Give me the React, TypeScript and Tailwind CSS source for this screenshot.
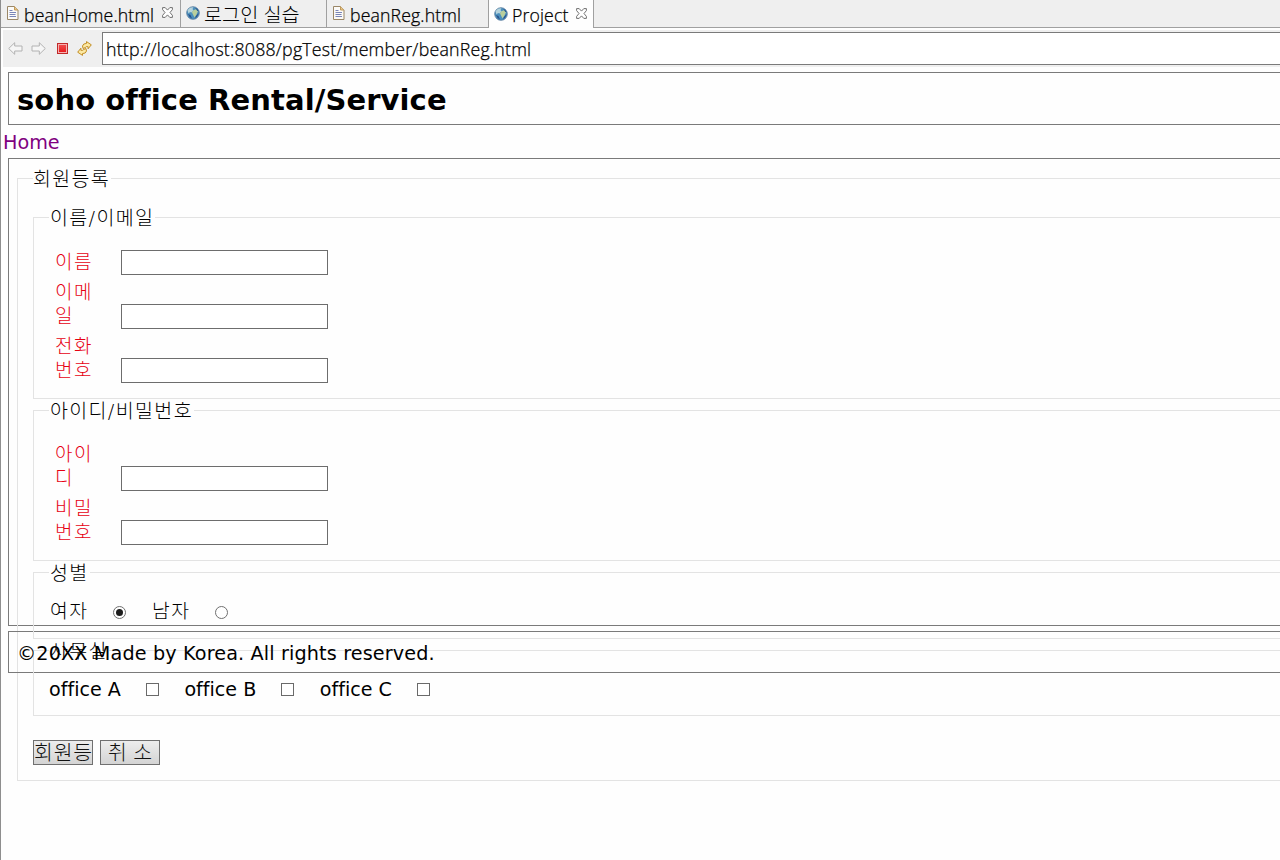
import type { ReactNode } from "react";

function FileIcon() {
  return (
    <svg className="-mt-px h-[14px] w-[12px] shrink-0" viewBox="0 0 12 14">
      <path d="M.5 .5h7l3.500 3.500v9.500h-10.500z" fill="#fbfaf8" stroke="#9a8767" />
      <path d="M7.500 .5v3.500h3.500" fill="#ecc98a" stroke="#c09a5c" />
      <path d="M2.500 4.500h3M2.500 6.500h6.500M2.500 8.500h6M2.500 10.500h6.500" stroke="#7a86b8" />
    </svg>
  );
}

function GlobeIcon() {
  return (
    <svg className="-mt-px size-[14px] shrink-0" viewBox="0 0 14 14">
      <circle cx="7" cy="7" r="6.300" fill="#4b8fbd" stroke="#55799a" strokeWidth=".8" />
      <path d="M1.500 4.500Q3.500 .9 7.500 1.200L6.500 3 7.500 4.500 5.500 6.500 4 6 2.500 7.500z" fill="#b5d3dc" />
      <path d="M7 4.500l3.500-1.500 1.500 2-1.500 3.500-2 3-1.500-3-1-2z" fill="#b9cf9c" />
      <path d="M2 8l2.500 1 1.500 3.500q-3-1-4-4.500zM10 10l2.500-3q-.3 3.500-3.500 5z" fill="#27508a" />
      <path d="M9 1.600q3 1 3.800 4l-2-1.400z" fill="#24558c" />
    </svg>
  );
}

function CloseIcon() {
  return (
    <svg className="-mt-[2px] size-[11px] shrink-0" viewBox="0 0 11 11" fill="#fff" stroke="#626262" strokeWidth=".9">
      <path d="M.6.6h2.600l2.300 2.500L7.800.6h2.600v2L8 5.500l2.400 2.900v2H7.800L5.500 7.900l-2.300 2.500H.6v-2L3 5.500.6 2.600z" />
    </svg>
  );
}

function ArrowIcon({ right = false }: { right?: boolean }) {
  return (
    <svg className={right ? "h-[13px] w-[15px] -scale-x-100" : "h-[13px] w-[15px]"} viewBox="0 0 15 13">
      <path d="M.7 6.500l6-5.800v3.300h7.300v5H6.700v3.300z" fill="#f6f6f6" stroke="#b2b2b2" strokeLinejoin="round" />
    </svg>
  );
}

function RefreshIcon() {
  return (
    <svg className="size-[15px]" viewBox="0 0 15 15" fill="#fce9a4" stroke="#bd8414" strokeWidth=".9" strokeLinejoin="round">
      <path d="M6 7.500L5.500 5q.5-2.600 4-2.600V.6l4.800 3.200-3.200 4V5.700Q9 5.200 8.300 6.500z" />
      <path d="M9 7.500l.5 2.500q-.5 2.600-4 2.600v1.800L.7 11.200l3.200-4v2.100Q6 9.800 6.700 8.500z" />
    </svg>
  );
}

const legendText = "h-[23px] pr-px text-[19.500px] leading-[25px] tracking-[1.350px] font-light";

function Group({ title, className, children }: { title: string; className: string; children: ReactNode }) {
  return (
    <fieldset className={`border border-[#e3e3e3] pl-[15px] ${className}`}>
      <legend className={`pl-px ${legendText}`}>{title}</legend>
      {children}
    </fieldset>
  );
}

function Field({ label, className }: { label: string; className: string }) {
  return (
    <div className={`flex items-end pl-[6px] ${className}`}>
      <label className="mb-px w-[42px] text-[19px] leading-[23.500px] font-light tracking-[1.400px] break-all text-[#e60012]">{label}</label>
      <input className="ml-6 h-[25px] w-[207px] border border-[#6d6d6d] bg-white" />
    </div>
  );
}

function Radio({ checked = false }: { checked?: boolean }) {
  return (
    <span className="flex size-[13px] items-center justify-center rounded-full border border-[#707070] bg-white">
      {checked && <span className="size-[7px] rounded-full bg-[#1c1c1c]" />}
    </span>
  );
}

function Office({ name }: { name: string }) {
  return (
    <label className="flex w-[135.400px] items-center">
      <span className="mt-px -mb-px w-[97px] text-[19.100px] leading-6 whitespace-nowrap">{name}</span>
      <span className="size-[13px] border border-[#6a6a6a] bg-white" />
    </label>
  );
}

const tabText = "whitespace-nowrap text-[17.700px] leading-6 font-light tracking-[0.120px] [-webkit-text-stroke:0.250px_black]";

export default function App() {
  return (
    <div className="h-[860px] w-[1280px] overflow-hidden border-l border-[#8e8e8e] bg-[#fefefe] font-['DejaVu_Sans','Noto_Sans_CJK_KR',sans-serif] text-black [font-variant-ligatures:none]">
      <div className="flex h-7 bg-[#efefef] font-['Open_Sans','Noto_Sans_CJK_KR',sans-serif]">
        <div className="flex w-[180px] items-center border-r border-b border-[#a0a0a0] pl-[6px]">
          <FileIcon />
          <span className={`mt-[3px] ml-[5px] w-[138px] ${tabText}`}>beanHome.html</span>
          <CloseIcon />
        </div>
        <div className="flex w-[146px] items-center border-r border-b border-[#a0a0a0] pl-[5px]">
          <GlobeIcon />
          <span className="mt-[2px] ml-1 text-[19.700px] leading-6 font-light whitespace-nowrap">로그인 실습</span>
        </div>
        <div className="flex w-[162px] items-center border-r border-b border-[#a0a0a0] pl-[6px]">
          <FileIcon />
          <span className={`mt-[3px] ml-[5px] ${tabText}`}>beanReg.html</span>
        </div>
        <div className="flex w-[105px] items-center border-r border-[#a0a0a0] bg-[#fefefe] pl-[5px]">
          <GlobeIcon />
          <span className={`mt-[2px] ml-1 w-16 ${tabText}`}>Project</span>
          <CloseIcon />
        </div>
        <div className="flex-1 border-b border-[#a0a0a0]" />
      </div>

      <div className="mt-[2px] ml-[2px] flex h-[37px] items-start bg-[#efefef] pt-[2px]">
        <div className="flex h-[33px] w-[99px] items-center pl-[5px]">
          <ArrowIcon />
          <span className="ml-2 flex">
            <ArrowIcon right />
          </span>
          <span className="ml-[11px] flex size-[11px] border border-[#c02a2a] bg-[#f6b0b0] p-px">
            <span className="flex-1 bg-linear-to-b from-[#f04a4a] to-[#e8141c]" />
          </span>
          <span className="ml-[9px]">
            <RefreshIcon />
          </span>
        </div>
        <div className="h-[33px] flex-1 border-y border-l border-[#7a7a7a] bg-white pl-[3px] font-['Open_Sans',sans-serif] text-[17.800px] leading-[33px] font-light tracking-[0.200px] whitespace-nowrap [-webkit-text-stroke:0.250px_black]">
          http://localhost:8088/pgTest/member/beanReg.html
        </div>
      </div>

      <header className="mt-[5px] ml-[7px] h-[53px] w-[1300px] border border-[#7a7a7a] pl-2">
        <h1 className="text-[29px] leading-[54px] font-bold tracking-[0.100px] whitespace-nowrap">soho office Rental/Service</h1>
      </header>
      <nav className="h-[33px] pl-[2px] text-[19.200px] leading-[36px] text-[#800080]">
        <a>Home</a>
      </nav>

      <main className="ml-[7px] h-[468px] w-[1300px] border border-[#7a7a7a] pt-2 pl-2">
        <fieldset className="h-[614px] w-[1400px] border border-[#e3e3e3] pl-[15px]">
          <legend className={legendText}>회원등록</legend>
          <div className="flex flex-col pt-4">
            <Group title="이름/이메일" className="h-[193px]">
              <Field label="이름" className="h-[46px]" />
              <Field label="이메일" className="h-[54px]" />
              <Field label="전화번호" className="h-[54px]" />
            </Group>
            <Group title="아이디/비밀번호" className="h-[162px]">
              <Field label="아이디" className="h-[69px]" />
              <Field label="비밀번호" className="h-[54px]" />
            </Group>
            <Group title="성별" className="h-[78px]">
              <div className="flex items-center pt-4 pl-px text-[19.300px] leading-6 font-light tracking-[1.400px]">
                <span className="w-[63px]">여자</span>
                <Radio checked />
                <span className="ml-[26px] w-[63px]">남자</span>
                <Radio />
              </div>
            </Group>
            <Group title="사무실" className="h-[77px]">
              <div className="flex pt-[15px]">
                <Office name="office A" />
                <Office name="office B" />
                <Office name="office C" />
              </div>
            </Group>
          </div>
          <div className="mt-6 flex gap-[7px] text-[20.500px] font-light text-[#111]">
            <button className="h-[25px] w-[60px] overflow-hidden border border-[#707070] bg-linear-to-b from-[#ededed] to-[#d4d4d4] text-left leading-[25px] tracking-[0.800px] whitespace-nowrap">
              회원등
            </button>
            <button className="h-[25px] w-[60px] border border-[#707070] bg-linear-to-b from-[#ededed] to-[#d4d4d4] leading-[25px] whitespace-nowrap">취 소</button>
          </div>
        </fieldset>
      </main>
      <footer className="mt-[5px] ml-[7px] h-[42px] w-[1300px] border border-[#7a7a7a] pl-2 text-[19.200px] leading-[43px] tracking-[0.140px] whitespace-nowrap">
        ©20XX Made by Korea. All rights reserved.
      </footer>
    </div>
  );
}
